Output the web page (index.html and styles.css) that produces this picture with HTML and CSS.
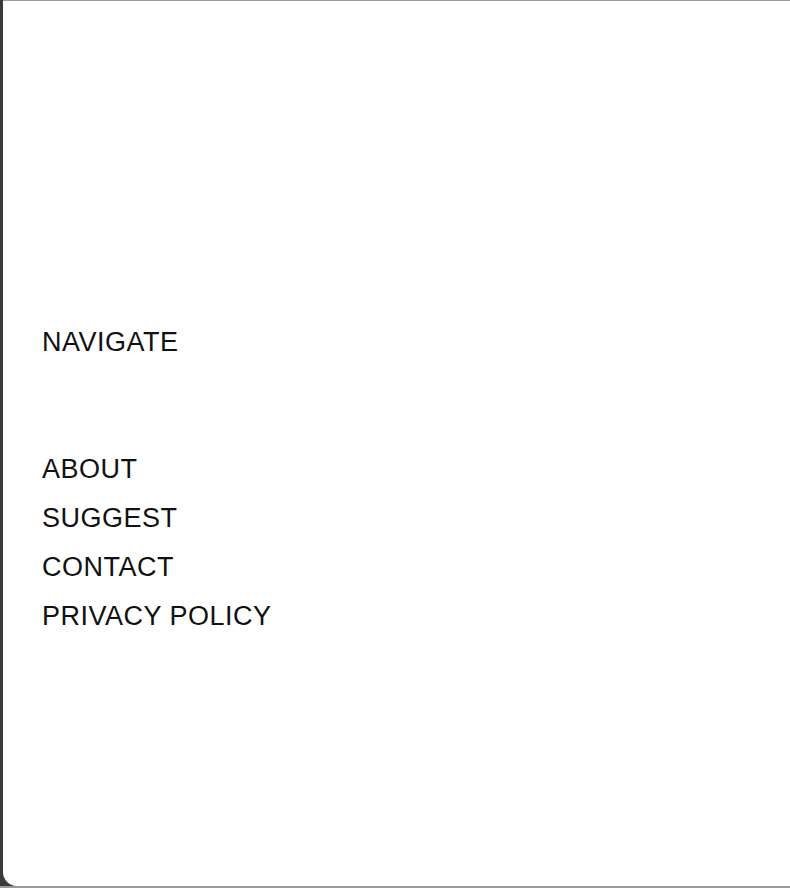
FILE: index.html
```html
<!DOCTYPE html>
<html>
<head>
<meta charset="utf-8">
<link rel="stylesheet" href="styles.css">
</head>
<body>
<div class="frame">
  <div class="panel">
    <nav class="menu">
      <div class="heading">NAVIGATE</div>
      <ul class="links">
        <li>ABOUT</li>
        <li>SUGGEST</li>
        <li>CONTACT</li>
        <li>PRIVACY POLICY</li>
      </ul>
    </nav>
  </div>
</div>
</body>
</html>
```
FILE: styles.css
```css
html, body {
  margin: 0;
  padding: 0;
  height: 100%;
}
body {
  background: #3a3a3a;
  font-family: "Liberation Sans", Arial, sans-serif;
  color: #111;
  overflow: hidden;
}
.frame {
  height: 888px;
  padding-left: 3px;
  box-sizing: border-box;
  background: #3a3a3a;
  display: flex;
  flex-direction: column;
  border-bottom: 2px solid #9a9a9a;
}
.panel {
  flex: 1;
  background: #fff;
  border-top: 1px solid #9c9c9c;
  border-bottom-left-radius: 14px;
  padding: 317px 0 0 39px;
}
.menu {
  font-size: 27px;
  line-height: 49px;
  letter-spacing: 0.5px;
}
.heading {
  margin-bottom: 78px;
}
.links {
  list-style: none;
  margin: 0;
  padding: 0;
}
```
